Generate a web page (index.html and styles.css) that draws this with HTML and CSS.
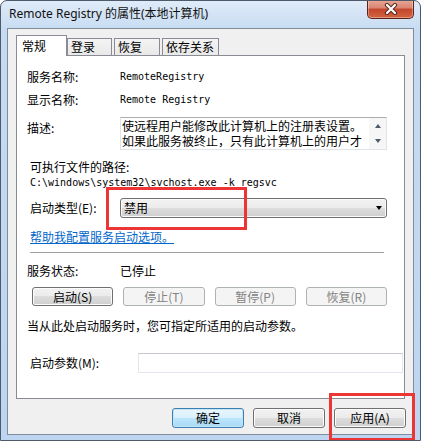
FILE: index.html
```html
<!DOCTYPE html>
<html>
<head>
    <meta charset="utf-8">
    <title>Remote Registry 的属性(本地计算机)</title>
    <link rel="stylesheet" href="styles.css">
</head>
<body>
    <div class="window">
        <div class="titlebar">
            <span class="title">Remote Registry 的属性(本地计算机)</span>
            <button class="close">
                <svg width="14" height="12" viewBox="0 0 14 12">
                    <path d="M3 2 L11 10 M11 2 L3 10" stroke="#5a2a22" stroke-width="4.2" stroke-linecap="round"/>
                    <path d="M3 2 L11 10 M11 2 L3 10" stroke="#fff" stroke-width="2.2" stroke-linecap="round"/>
                </svg>
            </button>
        </div>

        <div class="client">
            <div class="tabs">
                <div class="tab active">常规</div>
                <div class="tab">登录</div>
                <div class="tab">恢复</div>
                <div class="tab">依存关系</div>
            </div>

            <div class="panel">
                <div class="row">
                    <span class="label">服务名称:</span>
                    <span class="mono">RemoteRegistry</span>
                </div>
                <div class="row r-display">
                    <span class="label">显示名称:</span>
                    <span class="mono">Remote Registry</span>
                </div>
                <div class="row r-desc">
                    <span class="label">描述:</span>
                    <div class="desc">
                        <div class="desc-text">使远程用户能修改此计算机上的注册表设置。<br>如果此服务被终止，只有此计算机上的用户才</div>
                        <div class="scroll">
                            <span class="arrow up"></span>
                            <span class="arrow down"></span>
                        </div>
                    </div>
                </div>
                <div class="path-title">可执行文件的路径:</div>
                <div class="path mono">C:\windows\system32\svchost.exe -k regsvc</div>
                <div class="row r-type">
                    <span class="label">启动类型(E):</span>
                    <div class="select">
                        <span>禁用</span>
                        <span class="caret"></span>
                    </div>
                </div>
                <a class="link" href="#">帮助我配置服务启动选项。</a>
                <div class="sep"></div>
                <div class="row r-status">
                    <span class="label">服务状态:</span>
                    <span>已停止</span>
                </div>
                <div class="actions">
                    <button class="btn">启动(S)</button>
                    <button class="btn" disabled>停止(T)</button>
                    <button class="btn" disabled>暂停(P)</button>
                    <button class="btn" disabled>恢复(R)</button>
                </div>
                <div class="note">当从此处启动服务时，您可指定所适用的启动参数。</div>
                <div class="row r-param">
                    <span class="label">启动参数(M):</span>
                    <div class="input"></div>
                </div>
            </div>

            <div class="footer">
                <button class="btn default">确定</button>
                <button class="btn">取消</button>
                <button class="btn">应用(A)</button>
            </div>
        </div>

        <div class="mark mark-type"></div>
        <div class="mark mark-apply"></div>
    </div>
</body>
</html>
```

FILE: styles.css
```css
body {
    margin: 0;
    background: #fff;
    font-family: "Noto Sans CJK SC", sans-serif;
    font-size: 12px;
    color: #000;
}

.window {
    position: relative;
    width: 421px;
    height: 441px;
    box-sizing: border-box;
    border: 1px solid #4e5a6a;
    border-radius: 7px 7px 0 0;
    background: linear-gradient(#dfebf8, #c6dbf2 30px, #bdd5f0);
    padding: 0 6px 5px;
    display: flex;
    flex-direction: column;
    overflow: hidden;
}

.titlebar {
    height: 27px;
    flex: none;
    display: flex;
    align-items: flex-start;
    padding-left: 2px;
}

.title {
    font-family: "Noto Sans", "Noto Sans CJK SC", sans-serif;
    font-size: 12px;
    line-height: 26px;
    color: #111;
}

.close {
    margin-left: auto;
    margin-top: -1px;
    width: 47px;
    height: 19px;
    box-sizing: border-box;
    padding: 0;
    border: 1px solid #5e2219;
    border-top: none;
    border-radius: 0 0 5px 5px;
    background: linear-gradient(#e9a797, #d98470 45%, #c4452c 50%, #d2653f);
    box-shadow: inset 0 0 0 1px rgba(255, 255, 255, 0.35);
    display: flex;
    align-items: center;
    justify-content: center;
}

.client {
    flex: 1;
    border: 1px solid #7f8c9c;
    background: #f0f0f0;
    padding: 6px 8px 0;
    display: flex;
    flex-direction: column;
}

.tabs {
    display: flex;
    align-items: flex-end;
    height: 21px;
    margin-bottom: -1px;
    position: relative;
    z-index: 1;
}

.tab {
    box-sizing: border-box;
    height: 18px;
    border: 1px solid #898c95;
    background: linear-gradient(#f4f4f4, #e9e9e9);
    padding-left: 3px;
    line-height: 16px;
    margin-right: 2px;
}

.tab:nth-child(2) { width: 45px; }
.tab:nth-child(3) { width: 46px; }
.tab:nth-child(4) { width: 57px; }

.tab.active {
    width: 51px;
    height: 21px;
    margin-right: 0;
    border-bottom: none;
    background: #fff;
    padding-left: 5px;
    line-height: 19px;
}

.panel {
    height: 344px;
    flex: none;
    box-sizing: border-box;
    border: 1px solid #898c95;
    background: #fff;
    padding: 13px 17px 0 10px;
}

.row {
    display: flex;
    align-items: center;
    line-height: 16px;
}

.label {
    width: 93px;
    flex: none;
}

.mono {
    font-family: "DejaVu Sans Mono", "Noto Sans CJK SC", monospace;
    font-size: 10px;
}

.r-display { margin-top: 7px; }

.r-desc {
    margin-top: 9px;
    align-items: flex-start;
}

.r-desc .label { padding-top: 3px; }

.desc {
    flex: 1;
    height: 33px;
    box-sizing: border-box;
    border: 1px solid #dfe3ea;
    border-top-color: #abadb3;
    display: flex;
}

.desc-text {
    flex: 1;
    padding-left: 1px;
    line-height: 15px;
    white-space: nowrap;
}

.scroll {
    width: 17px;
    flex: none;
    background: #f6f6f6;
    display: flex;
    flex-direction: column;
    align-items: center;
    justify-content: space-around;
}

.arrow {
    width: 0;
    height: 0;
    border-left: 3px solid transparent;
    border-right: 3px solid transparent;
}

.arrow.up { border-bottom: 4px solid #4d5a6a; }
.arrow.down { border-top: 4px solid #4d5a6a; }

.path-title {
    margin-top: 9px;
    padding-left: 3px;
    line-height: 16px;
}

.path {
    padding-left: 3px;
    line-height: 16px;
}

.r-type { margin-top: 7px; }

.r-type .label,
.r-param .label {
    padding-left: 3px;
    box-sizing: border-box;
}

.select {
    flex: 1;
    height: 20px;
    box-sizing: border-box;
    border: 1px solid #707070;
    border-radius: 3px;
    background: linear-gradient(#f2f2f2, #ebebeb 50%, #dddddd 50%, #cfcfcf);
    box-shadow: inset 0 0 0 1px #fbfbfb;
    padding: 0 4px 0 3px;
    display: flex;
    align-items: center;
    justify-content: space-between;
}

.caret {
    width: 0;
    height: 0;
    border-left: 3.5px solid transparent;
    border-right: 3.5px solid transparent;
    border-top: 4px solid #000;
}

.link {
    display: inline-block;
    margin: 11px 0 0 3px;
    line-height: 16px;
    color: #0066cc;
    text-decoration: underline;
}

.sep {
    height: 1px;
    margin: 7px 3px 0 3px;
    background: #a0a0a0;
}

.r-status { margin-top: 10px; }

.actions {
    display: grid;
    grid-template-columns: repeat(4, 1fr);
    gap: 10px;
    margin-top: 8px;
    padding-left: 5px;
}

.btn {
    box-sizing: border-box;
    height: 19px;
    padding: 0;
    border: 1px solid #707070;
    border-radius: 3px;
    background: linear-gradient(#f2f2f2, #ebebeb 50%, #dddddd 50%, #cfcfcf);
    box-shadow: inset 0 0 0 1px #fcfcfc;
    font-family: "Noto Sans CJK SC", sans-serif;
    font-size: 12px;
    line-height: 16px;
    color: #000;
}

.btn:disabled {
    border-color: #adb2b5;
    background: #f4f4f4;
    box-shadow: none;
    color: #838383;
}

.note {
    margin-top: 12px;
    line-height: 16px;
}

.r-param { margin-top: 19px; }

.r-param .label { width: 111px; }

.input {
    flex: 1;
    height: 20px;
    margin-right: -16px;
    box-sizing: border-box;
    border: 1px solid #e3e6ec;
    border-top-color: #c5c8ce;
    background: #fff;
}

.footer {
    display: flex;
    justify-content: flex-end;
    gap: 9px;
    margin: 9px -1px 0 0;
}

.footer .btn {
    width: 72px;
    height: 20px;
}

.btn.default {
    border-color: #3c7fb1;
    background: linear-gradient(#eaf6fd, #d9f0fc 50%, #bee6fd 50%, #a7d9f5);
    box-shadow: inset 0 0 0 1px #c4e5f6;
}

.mark {
    position: absolute;
    box-sizing: border-box;
    border: 3px solid #ee3535;
}

.mark-type {
    left: 105px;
    top: 186px;
    width: 141px;
    height: 43px;
}

.mark-apply {
    left: 328px;
    top: 392px;
    width: 86px;
    height: 48px;
}
```
